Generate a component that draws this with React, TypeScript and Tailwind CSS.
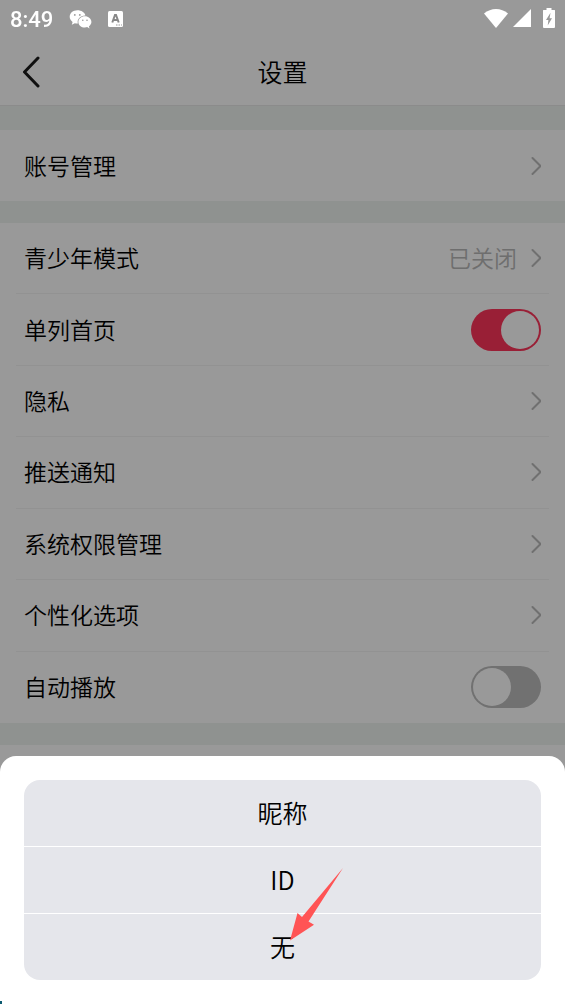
import React, { useState } from 'react';

type SettingRow = {
  label: string;
  value?: string;
  toggle?: boolean;
  on?: boolean;
};

const rows: SettingRow[] = [
  { label: '青少年模式', value: '已关闭' },
  { label: '单列首页', toggle: true, on: true },
  { label: '隐私' },
  { label: '推送通知' },
  { label: '系统权限管理' },
  { label: '个性化选项' },
  { label: '自动播放', toggle: true, on: false },
];

const options = ['昵称', 'ID', '无'];

const ChevronIcon: React.FC = () => (
  <svg className="w-3 h-5 shrink-0" viewBox="0 0 12 20" fill="none" stroke="#bbbbbb" strokeWidth="2" strokeLinecap="round" strokeLinejoin="round" aria-hidden="true">
    <path d="M3.500 2 L11.500 10 L3.500 18" />
  </svg>
);

const StatusBar: React.FC = () => (
  <div className="fixed top-0 inset-x-0 z-20 h-[38px] px-[10px] flex items-center justify-between text-white">
    <div className="flex items-center">
      <span className="pt-0.5 font-[Roboto,sans-serif] text-[22px] leading-6 font-medium">8:49</span>
      {/* WeChat */}
      <svg className="ml-4 w-[23px] h-[19px]" viewBox="0 0 22 19" aria-hidden="true">
        <path fill="#fff" d="M7.9 0.3C3.6 0.3 0.2 3.1 0.2 6.8c0 2.1 1.1 3.8 2.9 5.1l-0.8 2.8 3-1.5c1 .3 1.7.4 2.6.4h.5c-1.300-4.500 2.500-8.300 7.500-8.200C15.200 2.500 11.900.3 7.900.3z" />
        <path fill="#fff" d="M21.900 11.900c0-3.100-3-5.600-6.500-5.600-3.700 0-6.500 2.500-6.500 5.600s2.900 5.600 6.500 5.600c.8 0 1.600-.2 2.300-.4l2.300 1.300-.6-2.200c1.500-1.100 2.500-2.600 2.500-4.300z" />
        <g fill="#999">
          <circle cx="5.300" cy="4.900" r="0.900" />
          <circle cx="10.300" cy="4.900" r="0.900" />
          <circle cx="13.300" cy="10.300" r="0.800" />
          <circle cx="17.500" cy="10.300" r="0.800" />
        </g>
      </svg>
      {/* Input method */}
      <svg className="ml-4 w-[15px] h-4" viewBox="0 0 15 16" aria-hidden="true">
        <rect width="15" height="16" rx="1.500" fill="#fff" />
        <path d="M4.300 11.500 L7 4 H8 L10.700 11.500 M5.500 9 H9.500" fill="none" stroke="#888" strokeWidth="2" />
        <path d="M8 14h1.500M10.500 14H12M13 14h1" stroke="#999" strokeWidth="1.200" />
      </svg>
    </div>
    <div className="pb-0.5 flex items-center">
      <svg className="w-6 h-[19px]" viewBox="0 0 24 19" fill="#fff" aria-hidden="true">
        <path d="M0 4.500 C7 -1.500 17 -1.500 24 4.500 L12 19 Z" />
      </svg>
      <svg className="ml-[5px] w-[18px] h-[18px]" viewBox="0 0 18 18" fill="#fff" aria-hidden="true">
        <path d="M18 0 V18 H0 Z" />
      </svg>
      <svg className="ml-3 w-3 h-5" viewBox="0 0 12 20" aria-hidden="true">
        <path fill="#fff" d="M3.500 0h5v2h3a.5.5 0 0 1 .5.500v16.500a1 1 0 0 1-1 1H1a1 1 0 0 1-1-1V2.500a.5.5 0 0 1 .5-.5h3z" />
        <path fill="#999" d="M7.500 4.800 L3 12 H5.400 L4.700 17.500 L9 10.200 H6.600 Z" />
      </svg>
    </div>
  </div>
);

const Row: React.FC<{ row: SettingRow }> = ({ row }) => {
  const [on, setOn] = useState(!!row.on);

  if (row.toggle) {
    return (
      <label className="w-full h-full px-2 flex items-center justify-between">
        <span className="pb-0.5">{row.label}</span>
        <input
          type="checkbox"
          role="switch"
          checked={on}
          onChange={() => setOn(!on)}
          className="appearance-none w-[70px] h-[42px] p-0.5 rounded-full bg-[#bcbcbc] checked:bg-[#ff355a] flex checked:justify-end before:content-[''] before:w-[38px] before:h-[38px] before:rounded-full before:bg-white"
        />
      </label>
    );
  }

  return (
    <button type="button" className="w-full h-full px-2 flex items-center justify-between text-left">
      <span className="pb-0.5">{row.label}</span>
      <span className="flex items-center gap-3">
        {row.value && <span className="pb-0.5 text-[#b8b8b8]">{row.value}</span>}
        <ChevronIcon />
      </span>
    </button>
  );
};

const App: React.FC = () => (
  <div className="relative min-h-screen bg-white text-black font-['Noto_Sans_CJK_SC',sans-serif] font-[350] select-none">
    <StatusBar />

    {/* Settings page */}
    <main className="text-[23px] leading-8">
      <header className="pt-[38px] border-b border-[#e8e8e8]">
        <div className="h-[67px] px-5 grid grid-cols-[1fr_auto_1fr] items-center">
          <button type="button" aria-label="返回" className="justify-self-start">
            <svg className="w-[22px] h-8" viewBox="0 0 22 32" fill="none" stroke="#1c1c1c" strokeWidth="3" strokeLinecap="round" strokeLinejoin="round" aria-hidden="true">
              <path d="M18 2 L4.500 16 L18 30" />
            </svg>
          </button>
          <h1 className="pb-0.5 text-[25px]">设置</h1>
        </div>
      </header>

      <section className="border-t-[24px] border-[#eff3f1]">
        <div className="h-[71px] px-4">
          <Row row={{ label: '账号管理' }} />
        </div>
      </section>

      <section className="border-y-[22px] border-[#eff3f1]">
        <ul className="min-h-[500px] px-4 grid auto-rows-fr divide-y divide-[#f3f3f3]">
          {rows.map((row) => (
            <li key={row.label}>
              <Row row={row} />
            </li>
          ))}
        </ul>
      </section>
    </main>

    {/* Backdrop */}
    <div className="fixed inset-0 z-10 bg-black/40"></div>

    {/* Bottom sheet */}
    <div role="dialog" aria-label="选择" className="fixed bottom-0 inset-x-0 z-30 p-6 rounded-t-2xl bg-white">
      <div className="relative">
        <div className="flex flex-col gap-px rounded-2xl overflow-hidden">
          {options.map((option) => (
            <button key={option} type="button" className="h-[66px] pb-0.5 bg-[#e5e6eb] text-[25px] leading-8">
              {option}
            </button>
          ))}
        </div>
        {/* Pointer arrow */}
        <svg className="absolute left-1/2 top-[88px] ml-[7px] w-[53px] h-[73px] pointer-events-none" viewBox="0 0 53 73" fill="#ff5455" aria-hidden="true">
          <path d="M53 0 L18.500 53.500 L24 56.700 L0 72.500 L7.500 45 L12 49 Z" />
        </svg>
      </div>
      <span className="absolute left-0 bottom-0 w-0.5 h-[3px] bg-[#0b5a70]"></span>
    </div>
  </div>
);

export default App;
